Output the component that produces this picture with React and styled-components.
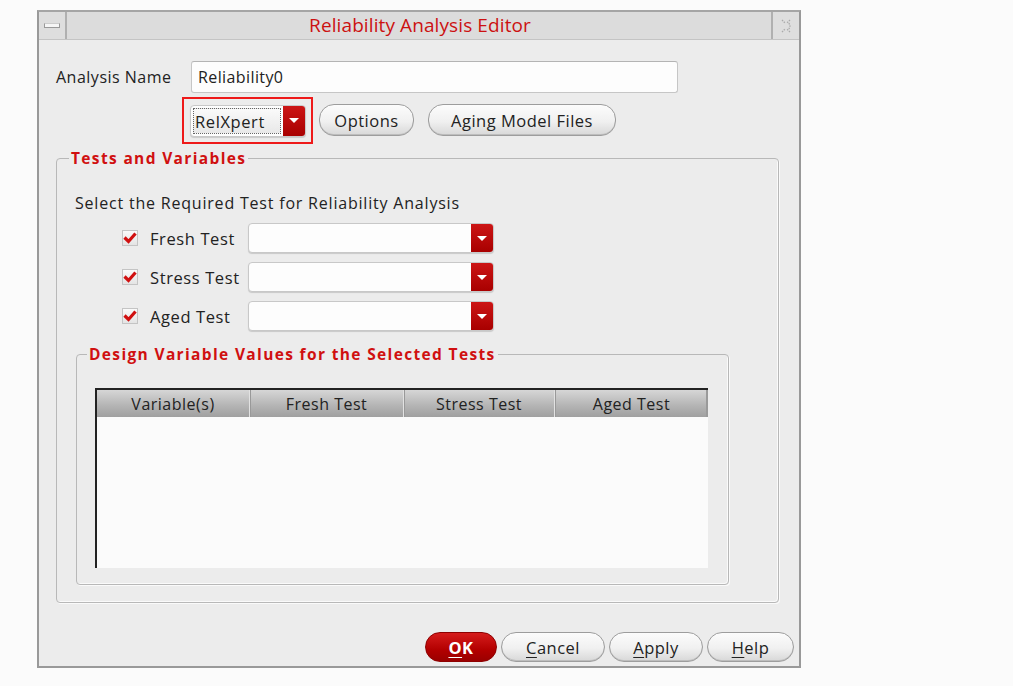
import React from "react";
import styled, { createGlobalStyle } from "styled-components";

const GlobalStyle = createGlobalStyle`
  html, body {
    margin: 0;
    padding: 0;
    background: #fbfbfb;
  }
  body {
    font-family: "Open Sans", "Noto Sans", "DejaVu Sans", sans-serif;
    color: #222;
  }
`;

const Page = styled.div`
  width: 1013px;
  height: 686px;
  padding: 10px 0 0 37px;
  box-sizing: border-box;
`;

const Window = styled.div`
  width: 764px;
  height: 658px;
  box-sizing: border-box;
  border: 2px solid #999;
  border-top-color: #a5a5a5;
  background: #ececec;
  display: flex;
  flex-direction: column;
`;

const TitleBar = styled.div`
  height: 27px;
  display: flex;
  align-items: stretch;
  background: #dcdcdc;
  border-bottom: 1px solid #c4c4c4;
`;

const TitleButton = styled.div`
  width: 26px;
  display: flex;
  align-items: center;
  justify-content: center;
  background: #dedede;
  border-right: ${(p) => (p.$left ? "2px solid #b0b0b0" : "none")};
  border-left: ${(p) => (p.$left ? "none" : "2px solid #b0b0b0")};
`;

const MinBar = styled.div`
  width: 14px;
  height: 3px;
  background: #f6f6f6;
  border: 1px solid #999;
  border-top-color: #ccc;
`;

const Title = styled.div`
  flex: 1;
  text-align: center;
  line-height: 27px;
  font-size: 19px;
  letter-spacing: 0.1px;
  color: #cc1111;
  padding-left: 2px;
`;

const Body = styled.div`
  flex: 1;
  display: flex;
  flex-direction: column;
  padding: 21px 5px 0 17px;
`;

const NameRow = styled.div`
  display: flex;
  align-items: center;
  height: 32px;
`;

const Label = styled.div`
  width: 135px;
  font-size: 16px;
  letter-spacing: 0.5px;
  color: #222;
`;

const TextInput = styled.div`
  width: 487px;
  height: 32px;
  box-sizing: border-box;
  background: #fdfdfd;
  border: 1px solid #c6c6c6;
  border-top-color: #b4b4b4;
  border-radius: 3px;
  font-size: 16px;
  letter-spacing: 0.4px;
  line-height: 30px;
  padding-left: 6px;
`;

const ToolRow = styled.div`
  display: flex;
  align-items: center;
  gap: 6px;
  margin: 4px 0 0 126px;
  height: 46px;
`;

const Highlight = styled.div`
  width: 131px;
  height: 47px;
  box-sizing: border-box;
  border: 2px solid #ee1a1a;
  padding: 6px 0 0 6px;
`;

const Combo = styled.div`
  width: ${(p) => p.$w}px;
  height: ${(p) => p.$h}px;
  box-sizing: border-box;
  display: flex;
  background: #fdfdfd;
  border: 1px solid #c8c8c8;
  border-radius: 4px;
  overflow: hidden;
  box-shadow: 0 1px 1px rgba(0, 0, 0, 0.15);
`;

const ComboText = styled.div`
  flex: 1;
  font-size: 16.5px;
  letter-spacing: 0.6px;
  line-height: 26px;
  padding-left: 1px;
  margin: 2px;
  border: ${(p) => (p.$focus ? "1px dotted #666" : "1px solid transparent")};
  background: ${(p) => (p.$focus ? "linear-gradient(#fafafa, #e8e8e8)" : "transparent")};
`;

const Arrow = styled.div`
  width: 22px;
  background: linear-gradient(#cc1515, #a80000);
  display: flex;
  align-items: center;
  justify-content: center;
  &::after {
    content: "";
    border-left: 5px solid transparent;
    border-right: 5px solid transparent;
    border-top: 5px solid #fff;
  }
`;

const PillButton = styled.div`
  height: ${(p) => p.$h || 31}px;
  width: ${(p) => p.$w}px;
  margin-left: ${(p) => p.$ml || 0}px;
  box-sizing: border-box;
  display: flex;
  align-items: center;
  justify-content: center;
  border-radius: 15px;
  font-size: 16.5px;
  letter-spacing: 0.5px;
  color: #222;
  border: 1px solid #9d9d9d;
  background: linear-gradient(#fcfcfc, #f0f0f0 55%, #d8d8d8);
  box-shadow: inset 0 -1px 0 #bdbdbd;
`;

const OkButton = styled(PillButton)`
  border-color: #8e0000;
  color: #fff;
  font-weight: bold;
  background: linear-gradient(#d51c1c, #b30000 60%, #9a0000);
  box-shadow: none;
`;

const Mnemonic = styled.span`
  text-decoration: underline;
  text-underline-offset: 3px;
`;

const Group = styled.fieldset`
  margin: ${(p) => p.$m};
  padding: 0;
  width: ${(p) => p.$w}px;
  height: ${(p) => p.$h}px;
  box-sizing: border-box;
  border: 1px solid #b8b8b8;
  border-radius: 4px;
  box-shadow: inset -1px -1px 0 #fafafa, 1px 1px 0 #fafafa;
  display: flex;
  flex-direction: column;
`;

const Legend = styled.legend`
  margin-left: ${(p) => p.$ml}px;
  padding: 0 2px;
  font-size: 15.5px;
  font-weight: bold;
  letter-spacing: 1.35px;
  color: #d01010;
`;

const Prompt = styled.div`
  font-size: 16px;
  letter-spacing: 0.8px;
  margin: 23px 0 0 18px;
`;

const TestList = styled.div`
  display: flex;
  flex-direction: column;
  gap: 9px;
  margin: 9px 0 0 65px;
`;

const TestRow = styled.div`
  display: flex;
  align-items: center;
`;

const Check = styled.div`
  width: 16px;
  height: 16px;
  box-sizing: border-box;
  border: 1px solid #c4c4c4;
  background: linear-gradient(#fafafa, #e4e4e4);
  display: flex;
  align-items: center;
  justify-content: center;
  margin-right: 12px;
`;

const TestLabel = styled.div`
  width: 98px;
  font-size: 16.5px;
  letter-spacing: 0.6px;
`;

const Table = styled.div`
  margin: 23px 0 0 18px;
  width: 613px;
  height: 180px;
  box-sizing: border-box;
  border-top: 2px solid #222;
  border-left: 2px solid #222;
  background: #fbfbfb;
  display: flex;
  flex-direction: column;
`;

const HeadRow = styled.div`
  display: grid;
  grid-template-columns: 152px 154px 151px 154px;
  height: 27px;
  background: linear-gradient(#d6d6d6, #b3b3b3 60%, #a0a0a0);
  border-right: 2px solid #9a9a9a;
`;

const HeadCell = styled.div`
  display: flex;
  align-items: center;
  justify-content: center;
  font-size: 16px;
  letter-spacing: 0.5px;
  color: #222;
  border-left: ${(p) => (p.$first ? "none" : "1px solid #e2e2e2")};
  box-shadow: ${(p) => (p.$first ? "none" : "inset 1px 0 0 #999")};
`;

const Footer = styled.div`
  margin-top: auto;
  margin-bottom: 4px;
  display: flex;
  justify-content: flex-end;
  gap: 4px;
`;

const CheckMark = () => (
  <svg width="14" height="12" viewBox="0 0 14 12">
    <path d="M1.5 5.5 L5.5 9.5 L12.5 1.5" fill="none" stroke="#d01010" strokeWidth="3.2" />
  </svg>
);

const tests = ["Fresh Test", "Stress Test", "Aged Test"];
const columns = ["Variable(s)", "Fresh Test", "Stress Test", "Aged Test"];

export default function App() {
  return (
    <>
      <GlobalStyle />
      <Page>
        <Window>
          <TitleBar>
            <TitleButton $left>
              <MinBar />
            </TitleButton>
            <Title>Reliability Analysis Editor</Title>
            <TitleButton>
              <svg width="14" height="16" viewBox="0 0 14 16">
                <path d="M3 2 L6 5 M11 2 L8 5 M3 14 L6 11 M11 14 L8 11 M10 5 L11 8 L10 11" fill="none" stroke="#aaa" strokeWidth="1.3" strokeDasharray="1.5 1" />
              </svg>
            </TitleButton>
          </TitleBar>
          <Body>
            <NameRow>
              <Label>Analysis Name</Label>
              <TextInput>Reliability0</TextInput>
            </NameRow>
            <ToolRow>
              <Highlight>
                <Combo $w={116} $h={32}>
                  <ComboText $focus>RelXpert</ComboText>
                  <Arrow />
                </Combo>
              </Highlight>
              <PillButton $w={95} $h={32}>Options</PillButton>
              <PillButton $w={188} $h={32} $ml={8}>
                Aging Model Files
              </PillButton>
            </ToolRow>
            <Group $w={723} $h={456} $m="4px 0 0 0">
              <Legend $ml={12}>Tests and Variables</Legend>
              <Prompt>Select the Required Test for Reliability Analysis</Prompt>
              <TestList>
                {tests.map((t) => (
                  <TestRow key={t}>
                    <Check>
                      <CheckMark />
                    </Check>
                    <TestLabel>{t}</TestLabel>
                    <Combo $w={246} $h={30}>
                      <ComboText />
                      <Arrow />
                    </Combo>
                  </TestRow>
                ))}
              </TestList>
              <Group $w={653} $h={242} $m="12px 0 0 19px">
                <Legend $ml={10}>Design Variable Values for the Selected Tests</Legend>
                <Table>
                  <HeadRow>
                    {columns.map((c, i) => (
                      <HeadCell key={c} $first={i === 0}>
                        {c}
                      </HeadCell>
                    ))}
                  </HeadRow>
                </Table>
              </Group>
            </Group>
            <Footer>
              <OkButton $w={72} $h={30}>
                <Mnemonic>O</Mnemonic>K
              </OkButton>
              <PillButton $w={104} $h={30}>
                <Mnemonic>C</Mnemonic>ancel
              </PillButton>
              <PillButton $w={94} $h={30}>
                <Mnemonic>A</Mnemonic>pply
              </PillButton>
              <PillButton $w={87} $h={30}>
                <Mnemonic>H</Mnemonic>elp
              </PillButton>
            </Footer>
          </Body>
        </Window>
      </Page>
    </>
  );
}
